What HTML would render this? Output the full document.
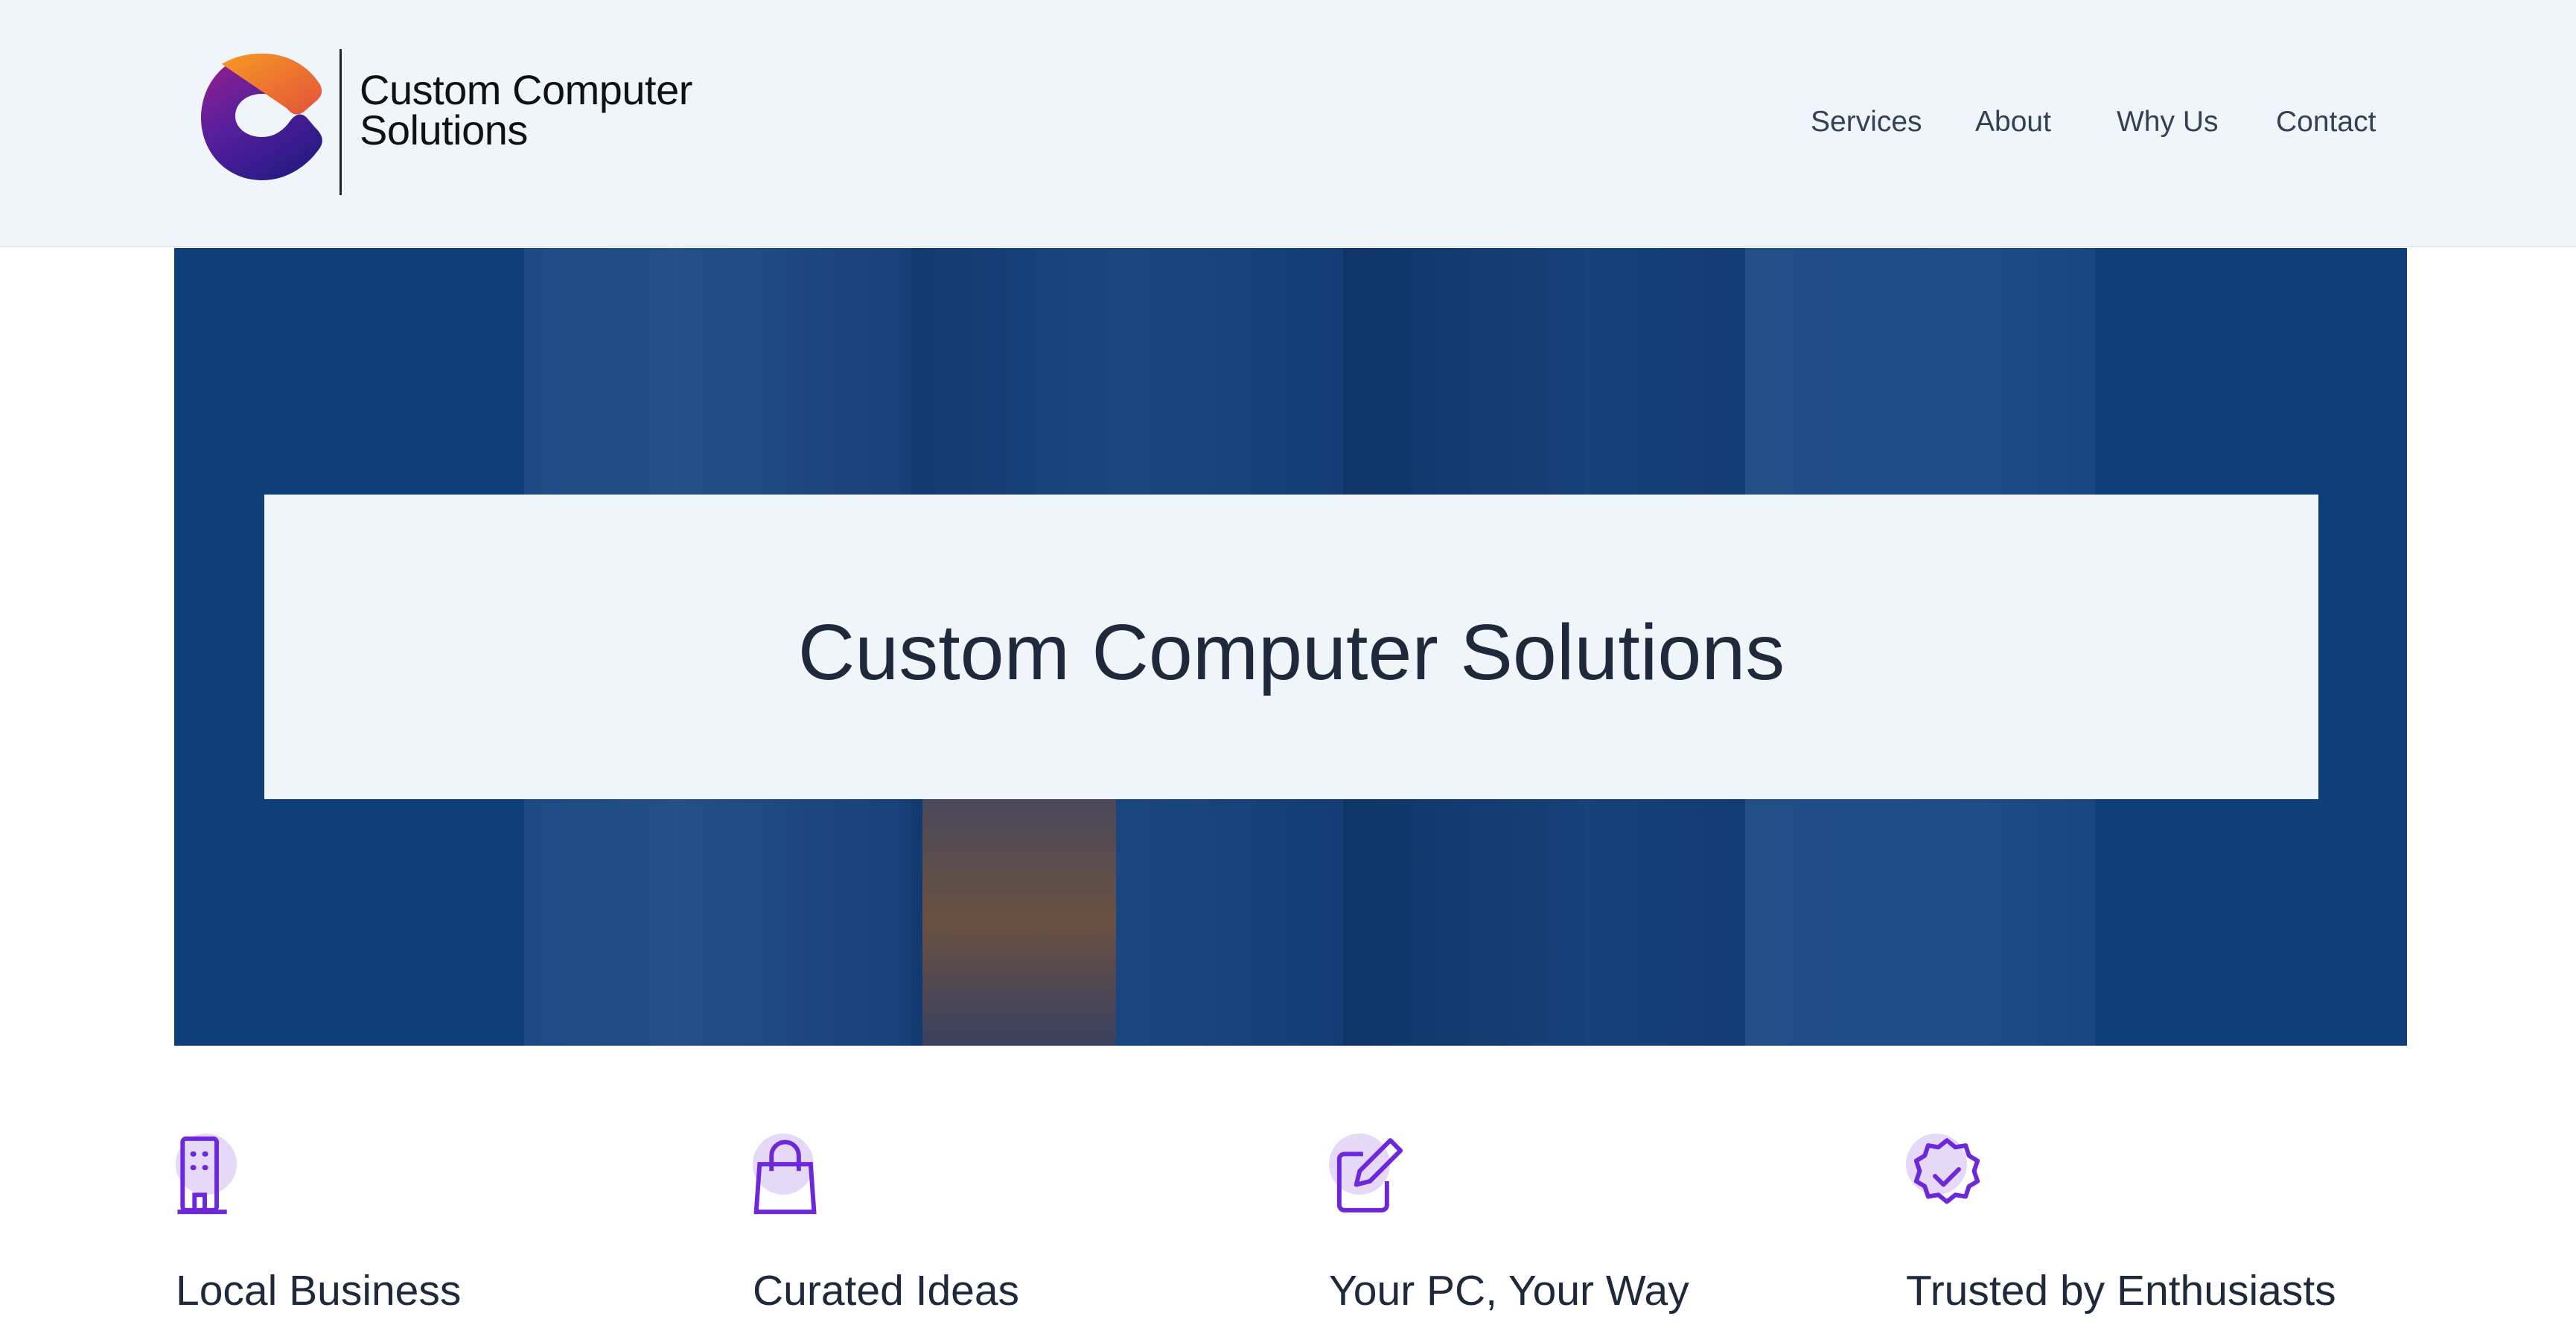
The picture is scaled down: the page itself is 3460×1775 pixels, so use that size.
<!DOCTYPE html>
<html><head><meta charset="utf-8"><style>
*{margin:0;padding:0;box-sizing:border-box}
body{width:3460px;height:1775px;background:#fff;font-family:"Liberation Sans","DejaVu Sans",sans-serif;overflow:hidden;position:relative;color:#1e293b}
.hdr{position:absolute;left:0;top:0;width:3460px;height:332px;background:#f0f5fa;border-bottom:2px solid #e2e8f0}
.nav a{position:absolute;top:142px;font-size:39px;color:#334155;text-decoration:none}
.hero{position:absolute;left:234px;top:333px;width:2999px;height:1071px;background:#0f3f78;overflow:hidden}
.strip{position:absolute;top:0;height:1071px}
.box{position:absolute;left:355px;top:664px;width:2759px;height:409px;background:#f0f5fa;display:flex;align-items:center;justify-content:center;font-size:106px;color:#1e293b;padding-top:16px}
.feat{position:absolute;top:1522px}
.feat .bg{position:absolute;left:0;top:0;width:82px;height:82px;border-radius:50%;background:#e6d8f7}
.feat svg{position:absolute;left:0;top:0}
.feat h3{position:absolute;top:178px;left:0;white-space:nowrap;font-weight:normal;font-size:57px;color:#1e293b}
</style></head><body>
<div class="hdr">
 <svg style="position:absolute;left:268px;top:68px" width="168" height="178" viewBox="0 0 168 178">
  <defs>
   <linearGradient id="o" x1="0" y1="0" x2="1" y2="1"><stop offset="0" stop-color="#f59a23"/><stop offset="1" stop-color="#e4513a"/></linearGradient>
   <linearGradient id="p" x1="0" y1="0" x2="0.6" y2="1"><stop offset="0" stop-color="#9b1f8a"/><stop offset="0.5" stop-color="#5a1f9c"/><stop offset="1" stop-color="#2a1a86"/></linearGradient>
  </defs>
  <path d="M84 4 C36 4 2 44 2 90 C2 136 36 174 84 174 C118 174 146 154 162 130 C168 120 164 112 156 104 L144 90 C136 82 128 86 122 94 C112 108 100 116 84 116 C64 116 48 104 48 88 C48 70 64 58 84 58 C100 58 110 66 118 78 C124 86 132 88 140 82 L156 68 C164 62 166 54 162 46 C146 20 118 4 84 4Z" fill="url(#p)"/>
  <path d="M30 18 C46 8 64 4 84 4 C118 4 146 20 162 46 C166 54 164 62 156 68 L140 82 C132 88 124 86 118 78 Z" fill="url(#o)"/>
 </svg>
 <div style="position:absolute;left:456px;top:66px;width:3px;height:196px;background:#222"></div>
 <div style="position:absolute;left:483px;top:94px;font-size:56px;line-height:54px;color:#111;letter-spacing:-0.5px">Custom Computer<br>Solutions</div>
 <div class="nav">
  <a style="left:2432px">Services</a><a style="left:2653px">About</a><a style="left:2843px">Why Us</a><a style="left:3057px">Contact</a>
 </div>
</div>
<div class="hero">
 <div class="strip" style="left:470px;width:520px;background:linear-gradient(90deg,#1d4a84,#244f88 40%,#173f78)"></div>
 <div class="strip" style="left:990px;width:580px;background:linear-gradient(90deg,#123a6f,#1a4680 50%,#133d74)"></div>
 <div class="strip" style="left:1570px;width:540px;background:linear-gradient(90deg,#0f3567,#174179 60%,#123c73)"></div>
 <div class="strip" style="left:2110px;width:470px;background:linear-gradient(90deg,#224f88,#1f4d88 60%,#184683)"></div>
 <div class="strip" style="left:1005px;top:740px;width:260px;height:331px;background:linear-gradient(180deg,#4a4a5a,#6a5040 50%,#3a4060)"></div>
</div>
<div class="box">Custom Computer Solutions</div>

<div class="feat" style="left:236px"><div class="bg"></div>
 <svg width="110" height="112" viewBox="0 0 48 49" fill="none" stroke="#6d28d9" stroke-width="2.6"><rect x="4" y="3" width="20" height="42" rx="2"/><path d="M1 46h29M11 45v-9h6v9"/><path d="M10 12h.5M17 12h.5M10 20h.5M17 20h.5" stroke-linecap="round" stroke-width="3"/></svg>
 <h3>Local Business</h3></div>
<div class="feat" style="left:1011px"><div class="bg"></div>
 <svg width="110" height="112" viewBox="0 0 48 49" fill="none" stroke="#6d28d9" stroke-width="2.6"><path d="M4 18h30l2 28H2z"/><path d="M11 22v-9a8 8 0 0 1 16 0v9"/></svg>
 <h3>Curated Ideas</h3></div>
<div class="feat" style="left:1785px"><div class="bg"></div>
 <svg width="110" height="112" viewBox="0 0 48 49" fill="none" stroke="#6d28d9" stroke-width="2.6" stroke-linejoin="round"><path d="M20 12H9a3 3 0 0 0-3 3v27a3 3 0 0 0 3 3h22a3 3 0 0 0 3-3V28"/><path d="M36 4l6 6-18 18-8 2 2-8z"/></svg>
 <h3>Your PC, Your Way</h3></div>
<div class="feat" style="left:2560px"><div class="bg"></div>
 <svg width="110" height="112" viewBox="0 0 48 49" fill="none" stroke="#6d28d9" stroke-width="2.6" stroke-linejoin="round"><path d="M24 4l5 4 6-1 2 6 5 3-2 6 2 6-5 3-2 6-6-1-5 4-5-4-6 1-2-6-5-3 2-6-2-6 5-3 2-6 6 1z"/><path d="M17 25l5 5 9-9" stroke-linecap="round"/></svg>
 <h3>Trusted by Enthusiasts</h3></div>
</body></html>
